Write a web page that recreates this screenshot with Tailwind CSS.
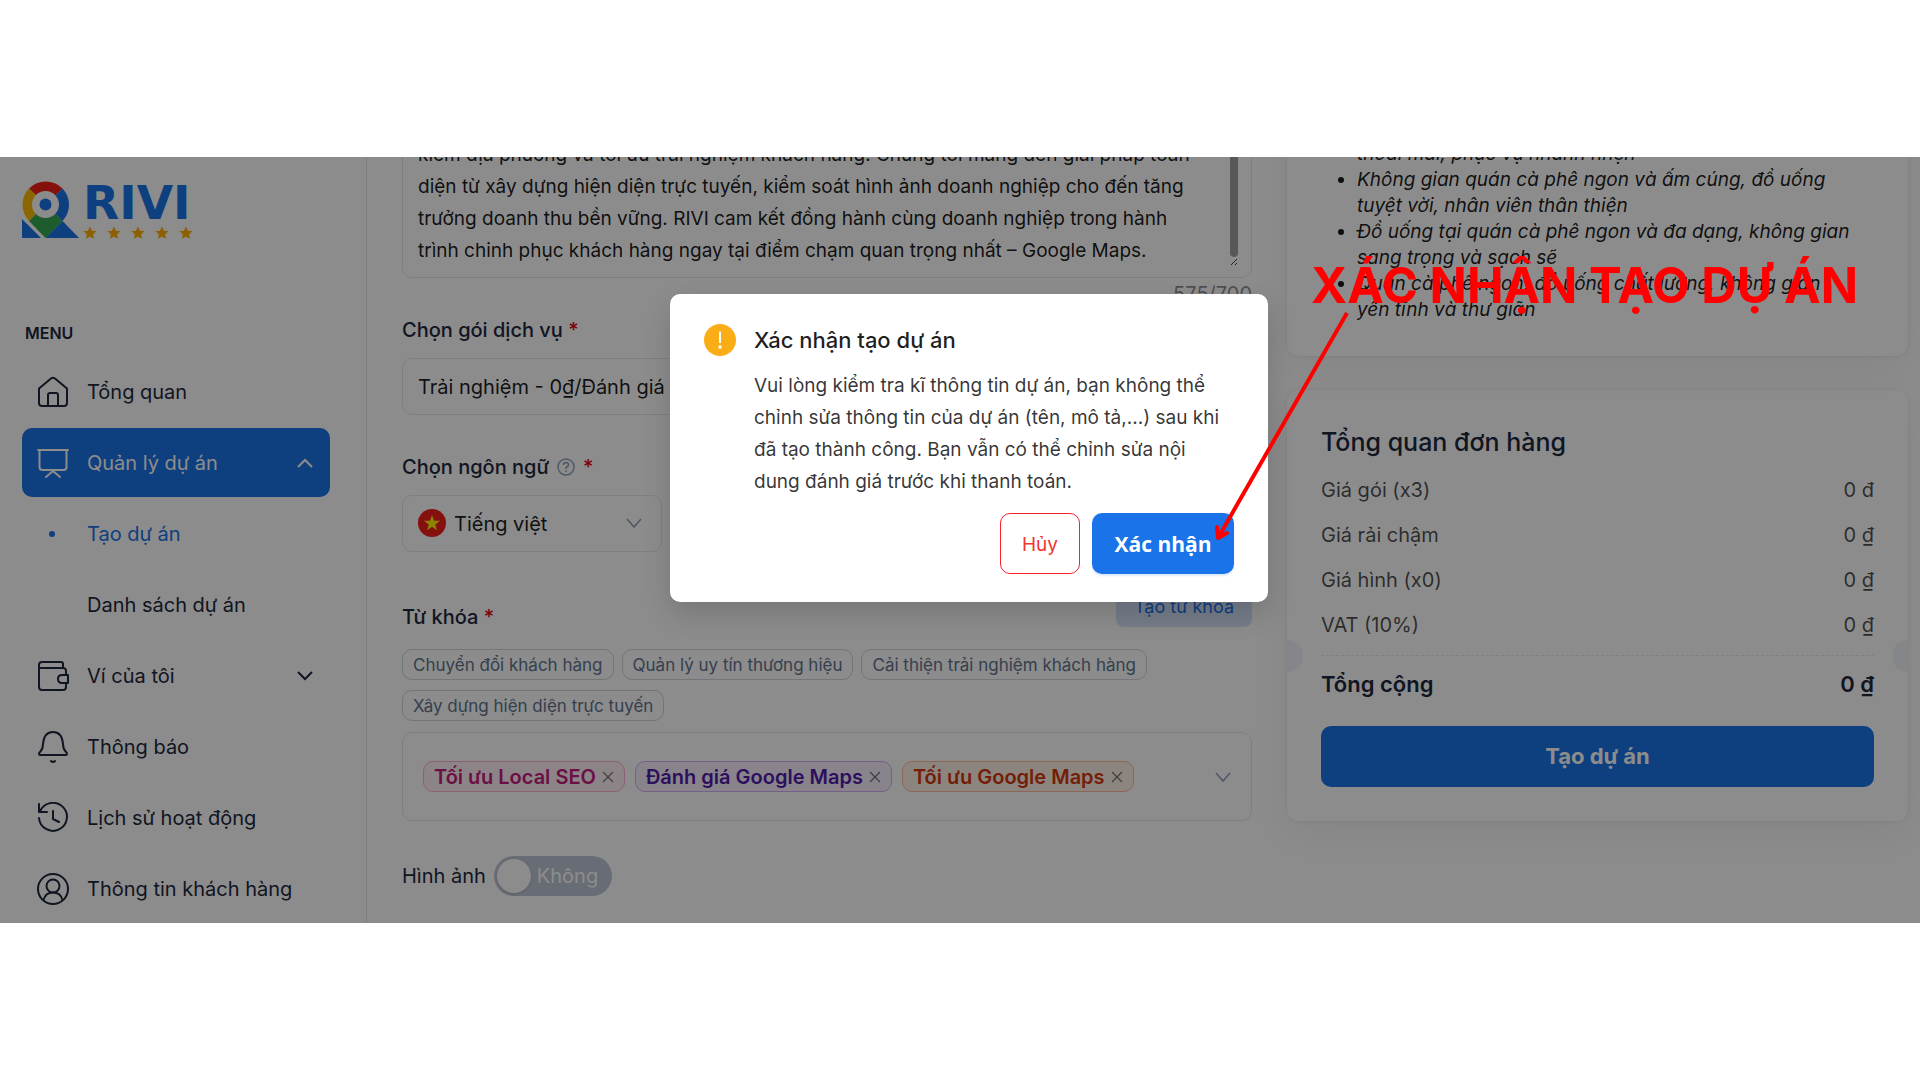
<!DOCTYPE html>
<html lang="vi">
<head>
    <meta charset="UTF-8">
    <meta name="viewport" content="width=device-width, initial-scale=1.0">
    <title>RIVI - Tạo dự án</title>
    <script src="https://cdn.jsdelivr.net/npm/@tailwindcss/browser@4"></script>
    <style>
        body {
            font-family: 'Inter', 'Noto Sans', sans-serif;
        }
    </style>
</head>
<body class="bg-white">
    <!-- shared shapes -->
    <svg class="hidden">
        <symbol id="star" viewBox="0 0 24 24"><path fill="currentColor" d="M12 1l3.400 7 7.600 1-5.600 5.300 1.400 7.700L12 18.300 5.200 22l1.400-7.700L1 9l7.600-1z"/></symbol>
        <symbol id="down" viewBox="0 0 16 16"><path fill="none" stroke="currentColor" stroke-width="1.600" d="M1 4l7 8 7-8"/></symbol>
        <symbol id="close" viewBox="0 0 12 12"><path fill="none" stroke="currentColor" stroke-width="1.200" d="M1 1l10 10M11 1L1 11"/></symbol>
    </svg>

    <div class="flex h-screen flex-col py-[157px]">
        <div class="relative flex min-h-0 flex-1 overflow-hidden bg-white text-xl text-slate-800">

            <!-- Sidebar -->
            <aside class="w-[367px] shrink-0 border-r border-gray-200 pl-[22px] pr-9 pt-6">
                <a href="#" class="flex items-start gap-[3px]">
                    <svg class="h-[58px] w-[58px]" viewBox="0 0 58 58">
                        <path fill="#1a73e8" d="M0 38v19h19zM40.500 40L57 57H23.500z"/>
                        <path fill="#f01f14" d="M23.500 23.500L7 7.500a23.500 23.500 0 0 1 33.500 0z"/>
                        <path fill="#fbbc04" d="M23.500 23.500L7 7.500a23.500 23.500 0 0 0 0 32.500z"/>
                        <path fill="#1a73e8" d="M23.500 23.500l17-16a23.500 23.500 0 0 1 0 32.500z"/>
                        <path fill="#34a853" d="M23.500 23.500L7 40l16.500 17 17-17z"/>
                        <circle cx="23.500" cy="23.500" r="13.500" fill="#fff"/>
                        <circle cx="23.500" cy="23.500" r="6" fill="#1a73e8"/>
                    </svg>
                    <span class="flex flex-col gap-px">
                        <span class="font-['DejaVu_Sans'] text-[47px] font-bold leading-[44px] text-[#1a73e8]">RIVI</span>
                        <span class="flex gap-2.5 text-[#fbaf04]">
                            <svg class="size-3.5"><use href="#star"/></svg>
                            <svg class="size-3.5"><use href="#star"/></svg>
                            <svg class="size-3.5"><use href="#star"/></svg>
                            <svg class="size-3.5"><use href="#star"/></svg>
                            <svg class="size-3.5"><use href="#star"/></svg>
                        </span>
                    </span>
                </a>

                <p class="mt-[81px] pl-[3px] text-base font-semibold">MENU</p>

                <nav class="mt-3 flex flex-col gap-0.5">
                    <a href="#" class="flex h-[69px] items-center gap-[18px] px-[15px]">
                        <svg class="size-8" viewBox="0 0 32 32" fill="none" stroke="currentColor" stroke-width="2" stroke-linejoin="round"><path d="M2 12.500L14 2.500q2-1.500 4 0l12 10V27q0 3-3 3H5q-3 0-3-3z"/><path d="M11 30V19q0-2 2-2h6q2 0 2 2v11"/></svg>
                        Tổng quan
                    </a>
                    <a href="#" class="flex h-[69px] items-center gap-[18px] rounded-[10px] bg-[#1a73e8] px-[15px] text-white">
                        <svg class="size-8" viewBox="0 0 32 32" fill="none" stroke="currentColor" stroke-width="2" stroke-linecap="round" stroke-linejoin="round"><path d="M1 3h30M2.500 3v17q0 3 3 3h21q3 0 3-3V3M9 30l7-6 7 6"/></svg>
                        Quản lý dự án
                        <svg class="ml-auto mr-0.5 size-4" viewBox="0 0 16 16" fill="none" stroke="currentColor" stroke-width="2"><path d="M1 12l7-7 7 7"/></svg>
                    </a>
                    <a href="#" class="flex h-[69px] items-center gap-8 pl-[27px] text-[#1a73e8]">
                        <span class="size-1.5 rounded-full bg-[#1a73e8]"></span>
                        Tạo dự án
                    </a>
                    <a href="#" class="flex h-[69px] items-center pl-[65px]">Danh sách dự án</a>
                    <a href="#" class="flex h-[69px] items-center gap-[18px] px-[15px]">
                        <svg class="size-8" viewBox="0 0 32 32" fill="none" stroke="currentColor" stroke-width="2" stroke-linejoin="round"><path d="M29 14V11q0-3-3-3H2V27q0 3 3 3h21q3 0 3-3v-4M2 8V5q0-3 3-3h19q2 0 2 2v4"/><path d="M31 15h-6q-4 0-4 4t4 4h6z"/></svg>
                        Ví của tôi
                        <svg class="ml-auto mr-0.5 size-4" viewBox="0 0 16 16" fill="none" stroke="currentColor" stroke-width="2"><path d="M1 4l7 7 7-7"/></svg>
                    </a>
                    <a href="#" class="flex h-[69px] items-center gap-[18px] px-[15px]">
                        <svg class="size-8" viewBox="0 0 32 32" fill="none" stroke="currentColor" stroke-width="2" stroke-linecap="round" stroke-linejoin="round"><path d="M3 24q-2-1 0-3 3-3 3-8Q7 1 16 1t10 12q0 5 3 8 2 2 0 3zM14 30q2 2 4 0"/></svg>
                        Thông báo
                    </a>
                    <a href="#" class="flex h-[69px] items-center gap-[18px] px-[15px]">
                        <svg class="size-8" viewBox="0 0 32 32" fill="none" stroke="currentColor" stroke-width="2" stroke-linecap="round" stroke-linejoin="round"><path d="M2 2v8h8M3 9.500A14 14 0 1 1 2 16M16 9v8l6 3"/></svg>
                        Lịch sử hoạt động
                    </a>
                    <a href="#" class="flex h-[69px] items-center gap-[18px] px-[15px]">
                        <svg class="size-8" viewBox="0 0 32 32" fill="none" stroke="currentColor" stroke-width="2"><circle cx="16" cy="16" r="15"/><circle cx="16" cy="13" r="6.500"/><path d="M6.500 27.500Q8 19.500 16 19.500t9.500 8"/></svg>
                        Thông tin khách hàng
                    </a>
                </nav>
            </aside>

            <!-- Project form -->
            <main class="flex min-w-0 flex-1 gap-[35px] pl-[35px] pr-3">
                <form class="flex min-w-0 flex-1 flex-col" onsubmit="return false">
                    <div class="relative -mt-[31px]">
                        <textarea id="desc" aria-label="Mô tả" wrap="off" class="block h-[152px] w-full resize-none overflow-hidden rounded-[10px] border border-slate-200 px-[15px] pt-3 text-[19px] leading-8 text-black/90">kiếm địa phương và tối ưu trải nghiệm khách hàng. Chúng tôi mang đến giải pháp toàn
diện từ xây dựng hiện diện trực tuyến, kiểm soát hình ảnh doanh nghiệp cho đến tăng
trưởng doanh thu bền vững. RIVI cam kết đồng hành cùng doanh nghiệp trong hành
trình chinh phục khách hàng ngay tại điểm chạm quan trọng nhất – Google Maps.</textarea>
                        <span class="absolute right-3.5 top-4 h-[115px] w-2 rounded-full bg-neutral-400"></span>
                        <svg class="absolute bottom-3 right-3.5 size-2" viewBox="0 0 8 8"><path fill="none" stroke="#444" d="M1 7l6-6M5 7l2-2"/></svg>
                    </div>
                    <p class="self-end text-right leading-8 text-black/45">575/700</p>

                    <label for="package" class="mt-0.5 font-medium leading-9">Chọn gói dịch vụ <span class="text-red-600">*</span></label>
                    <select id="package" class="mt-2.5 h-[57px] w-full appearance-none rounded-[10px] border border-slate-200 px-[15px] text-black/90">
                        <option>Trải nghiệm - 0₫/Đánh giá - 3 đánh giá</option>
                    </select>

                    <label for="lang" class="mt-[34px] flex items-center gap-2 font-medium leading-9">Chọn ngôn ngữ
                        <svg class="size-[18px] text-slate-400" viewBox="0 0 18 18" fill="none" stroke="currentColor" stroke-width="1.500"><circle cx="9" cy="9" r="8"/><path d="M6.500 7Q6.500 4.500 9 4.500T11.500 7Q11.500 8.300 9 9.500v1.500M9 12.300v1.600"/></svg>
                        <span class="text-red-600">*</span>
                    </label>
                    <div class="relative mt-2.5 w-[260px]">
                        <svg class="absolute left-4 top-3.5 size-7" viewBox="0 0 28 28"><circle cx="14" cy="14" r="14" fill="#f0201a"/><path fill="#fff200" d="M14 6l2 5.700 6 .1-4.800 3.700 1.700 5.800L14 17.800l-4.900 3.500 1.700-5.800L6 11.800l6-.1z"/></svg>
                        <select id="lang" class="h-[57px] w-full appearance-none rounded-[10px] border border-slate-200 pl-[51px] text-black/90">
                            <option>Tiếng việt</option>
                        </select>
                        <svg class="absolute right-5 top-5 size-4 text-slate-400"><use href="#down"/></svg>
                    </div>

                    <div class="mt-[35px] flex items-start justify-between">
                        <label for="keywords" class="mt-3 font-medium leading-9">Từ khóa <span class="text-red-600">*</span></label>
                        <button type="button" class="h-10 w-[136px] rounded-lg bg-[#d6e4fb] text-lg text-[#1a73e8]">Tạo từ khóa</button>
                    </div>
                    <div class="mt-3.5 flex flex-wrap gap-x-2 gap-y-2.5 text-[17px] text-slate-500">
                        <button type="button" class="h-[31px] rounded-[10px] border border-gray-300 px-2.5 leading-7">Chuyển đổi khách hàng</button>
                        <button type="button" class="h-[31px] rounded-[10px] border border-gray-300 px-2.5 leading-7">Quản lý uy tín thương hiệu</button>
                        <button type="button" class="h-[31px] rounded-[10px] border border-gray-300 px-2.5 leading-7">Cải thiện trải nghiệm khách hàng</button>
                        <button type="button" class="h-[31px] rounded-[10px] border border-gray-300 px-2.5 leading-7">Xây dựng hiện diện trực tuyến</button>
                    </div>
                    <div class="mt-[11px] flex h-[89px] shrink-0 items-center gap-2.5 rounded-[10px] border border-slate-200 px-5 text-xl font-semibold">
                        <span class="flex h-[31px] items-center gap-1.5 rounded-[10px] border border-[#ffadd2] bg-[#fff0f6] px-2.5 text-[#c41d7f]">Tối ưu Local SEO
                            <button type="button" aria-label="Xóa" class="text-neutral-500"><svg class="size-3"><use href="#close"/></svg></button>
                        </span>
                        <span class="flex h-[31px] items-center gap-1.5 rounded-[10px] border border-[#d3adf7] bg-[#f9f0ff] px-2.5 text-[#531dab]">Đánh giá Google Maps
                            <button type="button" aria-label="Xóa" class="text-neutral-500"><svg class="size-3"><use href="#close"/></svg></button>
                        </span>
                        <span class="flex h-[31px] items-center gap-1.5 rounded-[10px] border border-[#ffbb96] bg-[#fff2e8] px-2.5 text-[#d4380d]">Tối ưu Google Maps
                            <button type="button" aria-label="Xóa" class="text-neutral-500"><svg class="size-3"><use href="#close"/></svg></button>
                        </span>
                        <input id="keywords" type="text" class="min-w-0 flex-1 outline-none">
                        <svg class="size-4 shrink-0 text-slate-400"><use href="#down"/></svg>
                    </div>

                    <label class="mt-[35px] flex items-center gap-2">Hình ảnh
                        <input type="checkbox" class="peer sr-only">
                        <span class="flex h-10 w-[118px] items-center gap-1.5 rounded-full bg-[#bdc5d3] px-[3px] text-white">
                            <span class="size-[34px] rounded-full bg-white shadow"></span>Không
                        </span>
                    </label>
                </form>

                <!-- Right column -->
                <section class="flex w-[621px] shrink-0 flex-col gap-[34px]">
                    <div class="-mt-16 rounded-xl px-[34px] pb-[33px] pt-[22px] shadow-[0_10px_40px_rgba(0,0,0,0.06),0_0_4px_rgba(0,0,0,0.08)]">
                        <ul class="list-disc pl-9 text-[19px] leading-[26px] whitespace-nowrap italic text-black/90">
                            <li>Không gian thoải mái,<br>thoải mái, phục vụ nhanh nhẹn</li>
                            <li>Không gian quán cà phê ngon và ấm cúng, đồ uống<br>tuyệt vời, nhân viên thân thiện</li>
                            <li>Đồ uống tại quán cà phê ngon và đa dạng, không gian<br>sang trọng và sạch sẽ</li>
                            <li>Quán cà phê ngon, đồ uống chất lượng, không gian<br>yên tĩnh và thư giãn</li>
                        </ul>
                    </div>

                    <div class="relative rounded-xl px-[34px] pb-[34px] pt-[34px] shadow-[0_10px_40px_rgba(0,0,0,0.06),0_0_4px_rgba(0,0,0,0.08)]">
                        <h2 class="text-[25px] font-medium leading-9">Tổng quan đơn hàng</h2>
                        <dl class="mt-[7px] text-black/70">
                            <div class="flex h-[45px] items-center justify-between"><dt>Giá gói (x3)</dt><dd>0 đ</dd></div>
                            <div class="flex h-[45px] items-center justify-between"><dt>Giá rải chậm</dt><dd>0 ₫</dd></div>
                            <div class="flex h-[45px] items-center justify-between"><dt>Giá hình (x0)</dt><dd>0 ₫</dd></div>
                            <div class="flex h-[45px] items-center justify-between"><dt>VAT (10%)</dt><dd>0 ₫</dd></div>
                        </dl>
                        <div class="relative mt-2 border-t border-dashed border-gray-200">
                            <span class="absolute -left-[34px] -top-4 h-8 w-4 rounded-r-full bg-[#f0f4fa]"></span>
                            <span class="absolute -right-[34px] -top-4 h-8 w-4 rounded-l-full bg-[#f0f4fa]"></span>
                        </div>
                        <div class="mt-2.5 flex justify-between text-[22px] font-semibold leading-9"><span>Tổng cộng</span><span>0 ₫</span></div>
                        <button type="button" class="mt-6 h-[61px] w-full rounded-[10px] bg-[#1a73e8] text-[22px] font-bold text-white">Tạo dự án</button>
                    </div>
                </section>
            </main>

            <!-- Confirm dialog -->
            <div class="absolute inset-0 flex items-start justify-center bg-black/45 pl-[18px] pt-[137px]">
                <div role="dialog" aria-labelledby="confirmTitle" class="w-[598px] rounded-[10px] bg-white px-[34px] pb-7 pt-7 shadow-[0_12px_28px_rgba(0,0,0,0.15)]">
                    <div class="flex gap-[18px]">
                        <svg class="mt-0.5 size-8 shrink-0" viewBox="0 0 32 32"><circle cx="16" cy="16" r="16" fill="#faad14"/><path stroke="#fff" stroke-width="2" d="M16 7.500v11.500"/><circle cx="16" cy="23" r="1.700" fill="#fff"/></svg>
                        <div>
                            <h3 id="confirmTitle" class="text-[22px] font-medium leading-9 text-black/88">Xác nhận tạo dự án</h3>
                            <p class="mt-3 whitespace-nowrap text-[19px] leading-8 text-black/80">Vui lòng kiểm tra kĩ thông tin dự án, bạn không thể<br>chỉnh sửa thông tin của dự án (tên, mô tả,...) sau khi<br>đã tạo thành công. Bạn vẫn có thể chỉnh sửa nội<br>dung đánh giá trước khi thanh toán.</p>
                        </div>
                    </div>
                    <div class="mt-[15px] flex justify-end gap-3">
                        <button type="button" class="h-[61px] w-20 rounded-[10px] border border-[#f5222d] pt-1 text-[19px] text-[#f5342d]">Hủy</button>
                        <button type="button" class="h-[61px] w-[142px] rounded-[10px] bg-[#1a73e8] pt-0.5 font-['Open_Sans'] text-[21px] font-bold text-white shadow-[0_2px_2px_rgba(26,115,232,0.15)]">Xác nhận</button>
                    </div>
                </div>
            </div>
        </div>
    </div>

    <!-- Callout over the screen -->
    <p class="absolute left-[1311px] top-[258px] text-[49px] font-bold leading-[56px] whitespace-nowrap text-[#ff0000]">XÁC NHẬN TẠO DỰ ÁN</p>
    <svg class="absolute left-[1210px] top-[308px] h-[236px] w-[144px]" viewBox="0 0 144 236" fill="none" stroke="#ff0000" stroke-width="4"><path d="M137 5L8 230"/><path stroke-linecap="round" stroke-linejoin="round" d="M7 219l1 11 9-5"/></svg>
</body>
</html>
